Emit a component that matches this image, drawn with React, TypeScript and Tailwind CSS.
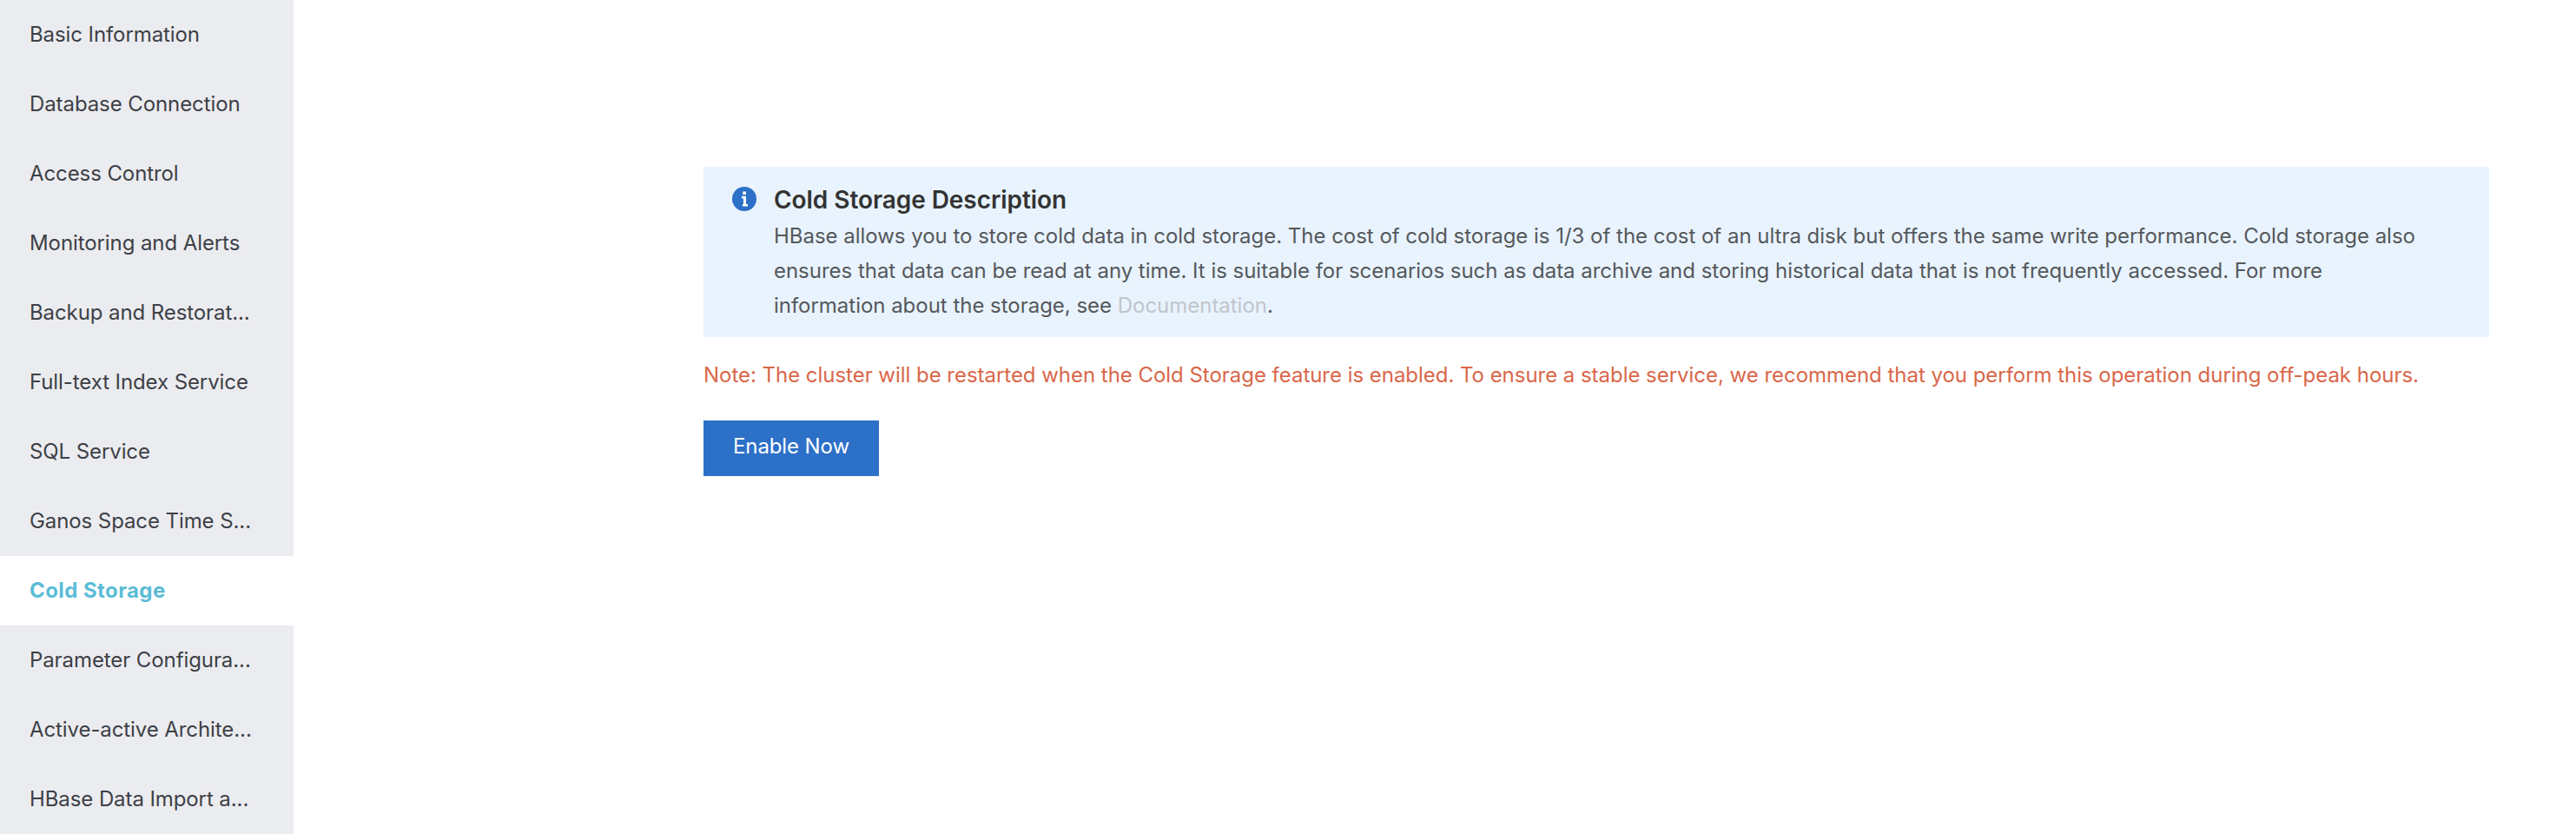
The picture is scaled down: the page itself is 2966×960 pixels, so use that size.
import React, { useState } from 'react';

const MENU_ITEMS = [
  'Basic Information',
  'Database Connection',
  'Access Control',
  'Monitoring and Alerts',
  'Backup and Restorat...',
  'Full-text Index Service',
  'SQL Service',
  'Ganos Space Time S...',
  'Cold Storage',
  'Parameter Configura...',
  'Active-active Archite...',
  'HBase Data Import a...',
];

const InfoIcon: React.FC = () => (
  <svg viewBox="0 0 28 28" className="w-7 h-7 shrink-0 mt-[23px]">
    <circle cx="14" cy="14" r="14" fill="#2d70c7" />
    <path d="M12.3 5.4H16v3.5h-3.7zM11 10.7h5V20h2v2.6h-6V20h1v-6.6h-2z" fill="#fff" />
  </svg>
);

const App: React.FC = () => {
  const [active, setActive] = useState('Cold Storage');

  return (
    <div className="flex h-[960px] bg-white font-['Inter',sans-serif] text-2xl">
      <nav className="w-[338px] shrink-0 bg-[#ebecf0]">
        {MENU_ITEMS.map(item => (
          <button
            key={item}
            onClick={() => setActive(item)}
            className={`block w-full h-20 pl-[34px] text-left whitespace-nowrap leading-[80px] cursor-pointer ${
              item === active ? 'bg-white font-bold tracking-[0.42px] text-[#5bbcd6]' : 'tracking-[-0.09px] text-[#3d4046]'
            }`}
          >
            {item}
          </button>
        ))}
      </nav>

      <main className="flex-1 pt-48 pl-[472px] pr-[100px]">
        <section className="flex h-[196px] pl-[33px] gap-5 bg-[#e8f3fe]">
          <InfoIcon />
          <div className="pt-[18px] whitespace-nowrap">
            <h2 className="text-[28px] leading-10 font-semibold tracking-[-0.06px] text-[#333]">Cold Storage Description</h2>
            <p className="mt-0.5 leading-10 tracking-[-0.024px] text-[#55585c]">
              <span className="block">HBase allows you to store cold data in cold storage. The cost of cold storage is 1/3 of the cost of an ultra disk but offers the same write performance. Cold storage also</span>
              <span className="block">ensures that data can be read at any time. It is suitable for scenarios such as data archive and storing historical data that is not frequently accessed. For more</span>
              <span className="block">information about the storage, see <a className="text-[#c1c5cb]">Documentation</a>.</span>
            </p>
          </div>
        </section>

        <p className="mt-6 leading-10 whitespace-nowrap tracking-[-0.033px] text-[#d9674a]">
          Note: The cluster will be restarted when the Cold Storage feature is enabled. To ensure a stable service, we recommend that you perform this operation during off-peak hours.
        </p>

        <button className="mt-8 w-[202px] h-16 pb-1 tracking-[-0.1px] bg-[#2d70c7] text-white whitespace-nowrap cursor-pointer">Enable Now</button>
      </main>
    </div>
  );
};

export default App;
